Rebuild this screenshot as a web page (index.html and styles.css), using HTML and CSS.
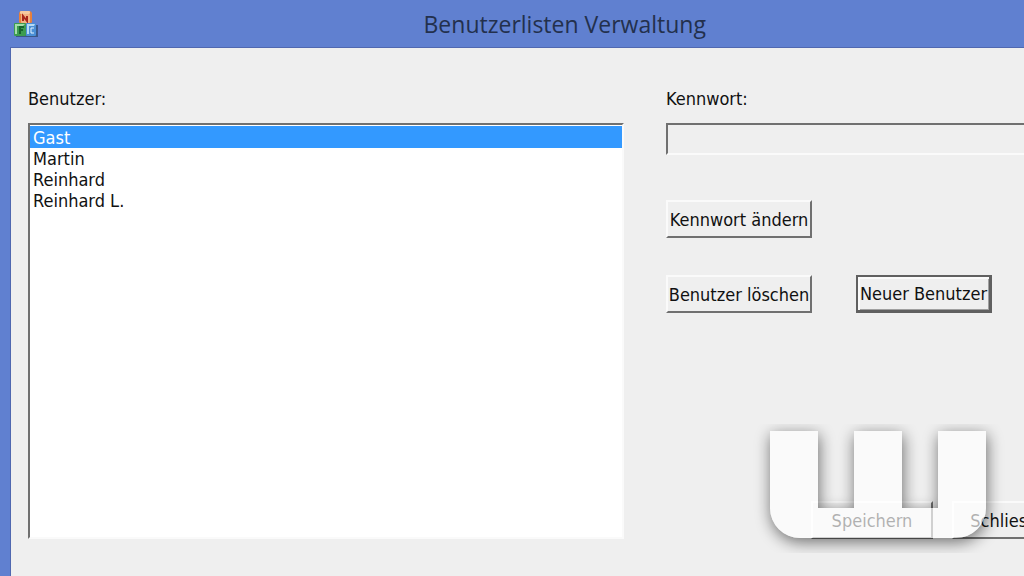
FILE: index.html
```
<!DOCTYPE html>
<html lang="de">

<head>
    <meta charset="UTF-8">
    <meta name="viewport" content="width=device-width, initial-scale=1.0">
    <title>Benutzerlisten Verwaltung</title>
    <link rel="stylesheet" href="styles.css">
</head>

<body>
    <div class="window">
        <header class="titlebar">
            <svg class="app-icon" viewBox="0 0 26 28" aria-hidden="true">
                <path d="M3 15h22v12H3z" fill="#2b4468" opacity=".7" />
                <rect x="6" y="1" width="13" height="13" rx="3" fill="#e8803c" />
                <rect x="7" y="1" width="10" height="3" rx="1" fill="#f7c9a0" />
                <rect x="8" y="4" width="9" height="9" rx="1" fill="#f3b183" />
                <path d="M10 11V6l4 5V6" fill="none" stroke="#a8261c" stroke-width="2" />
                <rect x="1" y="13" width="12" height="13" rx="1" fill="#3c9c50" />
                <path d="M2 14h10l-2 2H4v8H2z" fill="#a5dcab" />
                <path d="M7 24v-7h4M7 20h3" fill="none" stroke="#17642e" stroke-width="2" />
                <rect x="13" y="13" width="10" height="13" rx="1" fill="#4a8fd6" />
                <path d="M14 14h8l-1 2h-5v8h-2z" fill="#b5daf5" />
                <path d="M21 18h-3v5h3" fill="none" stroke="#e4f3ff" stroke-width="1" />
            </svg>
            <h1>Benutzerlisten Verwaltung</h1>
        </header>

        <main class="dialog">
            <div class="users">
                <label for="user-list">Benutzer:</label>
                <select id="user-list" size="15">
                    <option selected>Gast</option>
                    <option>Martin</option>
                    <option>Reinhard</option>
                    <option>Reinhard L.</option>
                </select>
            </div>

            <div class="settings">
                <label for="password">Kennwort:</label>
                <input type="password" id="password" disabled>
                <div class="actions">
                    <button type="button">Kennwort ändern</button>
                </div>
                <div class="actions">
                    <button type="button">Benutzer löschen</button>
                    <button type="button" class="default">Neuer Benutzer</button>
                </div>
                <div class="footer">
                    <button type="button">Speichern</button>
                    <button type="button">Schliessen</button>
                </div>
            </div>
        </main>
    </div>

    <svg class="logo" viewBox="0 0 276 166" aria-hidden="true">
        <defs>
            <path id="logo-shape" d="M30 30H78V107H114V30H162V107H198V30H246V107A30 30 0 0 1 216 137H60A30 30 0 0 1 30 107Z" />
            <mask id="outside">
                <rect x="-20" y="-20" width="316" height="206" fill="#fff" />
                <use href="#logo-shape" fill="#000" />
            </mask>
            <filter id="blur" x="-20%" y="-30%" width="140%" height="160%">
                <feGaussianBlur stdDeviation="8" />
            </filter>
        </defs>
        <g mask="url(#outside)">
            <use href="#logo-shape" x="1" y="4" fill="#000" opacity=".55" filter="url(#blur)" />
        </g>
        <use href="#logo-shape" fill="#fff" opacity=".67" />
    </svg>
</body>

</html>
```

FILE: styles.css
```
* {
    box-sizing: border-box;
}

body {
    margin: 0;
    position: relative;
    min-height: 100vh;
    overflow: hidden;
    font-family: "DejaVu Sans Condensed", "DejaVu Sans", sans-serif;
    font-size: 18px;
    color: #111;
}

/* the window is wider than the screen and runs out on the right */
.window {
    display: flex;
    flex-direction: column;
    width: 110vw;
    min-height: 100vh;
    padding-left: 10px;
    background-color: #6080d0;
}

.titlebar {
    display: flex;
    align-items: center;
    height: 47px;
    padding-left: 3px;
}

.titlebar h1 {
    flex: 1;
    margin: 0;
    padding-right: 36px;
    text-align: center;
    font-family: "Open Sans", sans-serif;
    font-size: 23px;
    font-weight: 400;
    color: #23304d;
}

.app-icon {
    width: 26px;
    height: 28px;
}

.dialog {
    flex: 1;
    display: grid;
    grid-template-columns: 596px 1fr;
    gap: 42px;
    padding: 40px 18px 37px 17px;
    background-color: #efefef;
    border-top: 1px solid #5068b0;
    border-left: 1px solid #5068b0;
}

.users,
.settings {
    display: flex;
    flex-direction: column;
}

label {
    line-height: 22px;
    margin-bottom: 13px;
}

select,
input {
    margin: 0;
    border: 2px solid;
    border-color: #707070 #fafafa #fafafa #707070;
    border-radius: 0;
    outline: none;
    font: inherit;
}

select {
    flex: 1;
    padding: 1px 0 0;
    background-color: #fff;
    color: #111;
    overflow: hidden;
}

option {
    padding: 0 3px;
    min-height: 21px;
}

option:checked {
    padding-top: 1px;
    background: linear-gradient(#3399ff, #3399ff);
    -webkit-text-fill-color: #fff;
}

input {
    height: 32px;
    background-color: #efefef;
}

button {
    min-width: 146px;
    height: 38px;
    padding: 0;
    border: 2px solid;
    border-color: #fafafa #707070 #707070 #fafafa;
    border-radius: 0;
    background-color: #efefef;
    font: inherit;
    color: #111;
}

.actions {
    display: flex;
    gap: 44px;
    margin-top: 37px;
}

.actions:first-of-type {
    margin-top: 45px;
}

.default {
    min-width: 136px;
    border-color: #606060;
    border-width: 2px 3px 3px 2px;
    box-shadow: inset 2px 2px #fafafa, inset -1px -1px #a0a0a0;
}

.footer {
    display: flex;
    gap: 19px;
    margin-top: auto;
    margin-left: 145px;
}

.footer button {
    min-width: 122px;
}

.logo {
    position: absolute;
    left: 740px;
    top: 401px;
    width: 276px;
    height: 166px;
    overflow: visible;
    pointer-events: none;
}
```
